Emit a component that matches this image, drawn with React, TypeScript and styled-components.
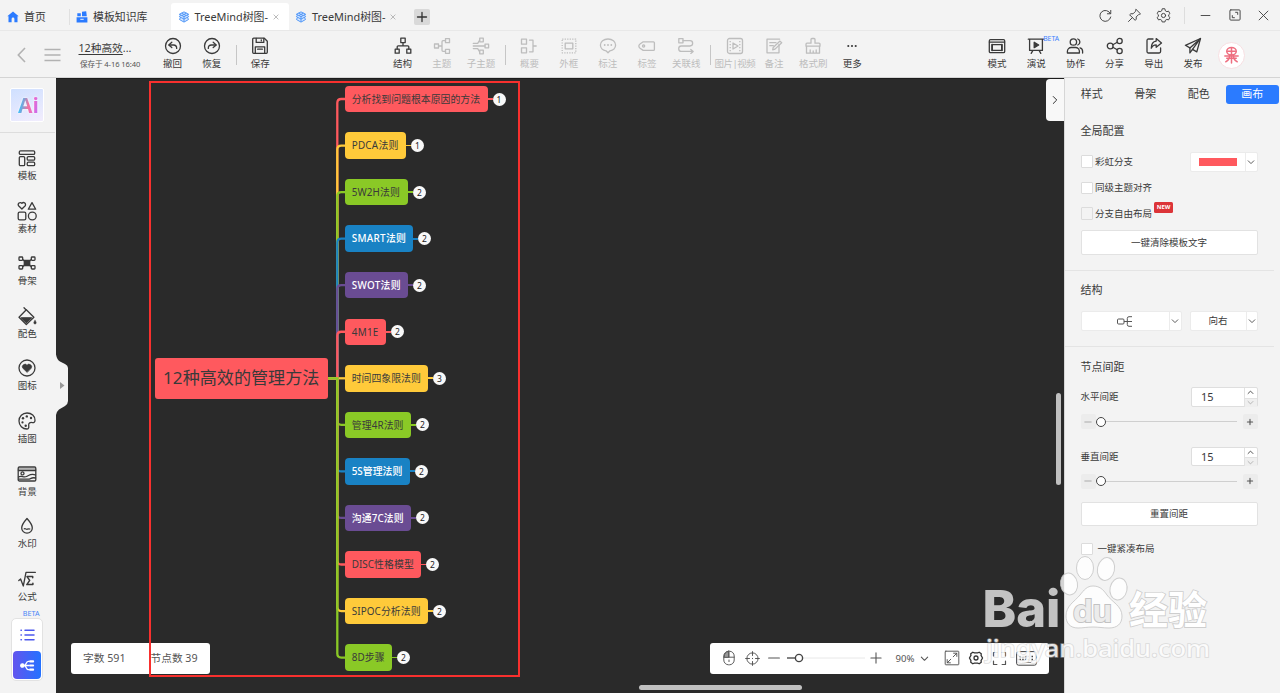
import React from "react";
import styled, { createGlobalStyle, css } from "styled-components";

const GlobalStyle = createGlobalStyle`
  * { box-sizing: border-box; }
  html, body { margin: 0; padding: 0; overflow: hidden; background: #f3f3f3; }
  body {
    font-family: "Noto Sans", "Noto Sans CJK SC", sans-serif;
    color: #3a3a3a;
    font-size: 9.5px;
    line-height: 1.2;
  }
  svg { display: block; flex: none; }
`;

const ink = "#3a3a3a";
const muted = "#bdbdbd";

/* ---------- icons, drawn on a 20 x 20 grid ---------- */

type IconProps = { size?: number; color?: string; sw?: number; children: React.ReactNode };
const Icon = ({ size = 20, color = "currentColor", sw = 1.3, children }: IconProps) => (
  <svg width={size} height={size} viewBox="0 0 20 20" fill="none" stroke={color} strokeWidth={sw} strokeLinejoin="round" strokeLinecap="round">
    {children}
  </svg>
);
const solid = { fill: "currentColor", stroke: "none" };

const icons: Record<string, React.ReactNode> = {
  undo: <><circle cx="10" cy="10" r="7.5" /><path d="M8.8 6.3 5.8 9l3 2.6" /><path d="M6.2 9h4.3c2 0 3.2 1.2 3.2 3.4" /></>,
  redo: <><circle cx="10" cy="10" r="7.5" /><path d="M11.2 6.3 14.2 9l-3 2.6" /><path d="M13.8 9H9.5c-2 0-3.2 1.2-3.2 3.4" /></>,
  save: <><path d="M2.7 3.2a1 1 0 0 1 1-1h10.6l3 3v11.1a1 1 0 0 1-1 1H3.7a1 1 0 0 1-1-1z" /><path d="M6.2 2.4v4h7.6v-4M11.3 3.8v1M5.3 17v-6.2h9.4V17M7.6 13.2h4.8" /></>,
  structure: <><rect x="7.8" y="2.2" width="4.4" height="4.4" /><rect x="2.2" y="13.2" width="4" height="4" /><rect x="13.8" y="13.2" width="4" height="4" /><path d="M10 6.6v3.2M4.2 13.2v-2.4a1 1 0 0 1 1-1h9.6a1 1 0 0 1 1 1v2.4" /></>,
  topic: <><rect x="2.5" y="8" width="4" height="4" /><rect x="13.5" y="2.7" width="4" height="4" /><rect x="13.5" y="13.3" width="4" height="4" /><path d="M6.5 10h3.5M13.5 4.7H11a1 1 0 0 0-1 1v8.6a1 1 0 0 0 1 1h2.5" /></>,
  subtopic: <><rect x="8.7" y="2.2" width="3.6" height="3.6" /><rect x="14" y="8.2" width="3.6" height="3.6" /><rect x="8.7" y="14.2" width="3.6" height="3.6" /><path d="M2.3 10H14M2.3 7.4h4.4L8.7 4M2.3 12.6h4.4l2 3.4" /></>,
  summary: <><rect x="2.5" y="3.2" width="5" height="5" /><rect x="2.5" y="11.8" width="5" height="5" /><path d="M10.5 4.2H14v11.6h-3.5M14 10h3.2" /></>,
  frame: <><rect x="3.2" y="3.2" width="13.6" height="13.6" strokeDasharray="1.2 1.3" strokeLinecap="butt" /><rect x="6.2" y="7.2" width="7.6" height="5.6" /></>,
  callout: <><path d="M10 3c4.4 0 7.6 2.6 7.6 6 0 3.2-2.6 5.4-5.6 5.8L10 16.8l-2-2C5 14.4 2.4 12.2 2.4 9c0-3.4 3.2-6 7.6-6z" /><g {...solid}><circle cx="6.7" cy="9" r=".9" /><circle cx="10" cy="9" r=".9" /><circle cx="13.3" cy="9" r=".9" /></g></>,
  tag: <><path d="M6.2 5.800h10.2a1 1 0 0 1 1 1v6.600a1 1 0 0 1-1 1H6.200L3 12.200a2.500 2.500 0 0 1 0-4.200z" /><circle cx="6.6" cy="10" r="1.1" /></>,
  relation: <><rect x="2.8" y="2.6" width="4.2" height="4.2" /><path d="M7 4.700h7a2.650 2.650 0 0 1 0 5.300H5.400a2.700 2.700 0 0 0 0 5.400H17M14.800 13.400l2.400 2-2.400 2" /></>,
  video: <><rect x="2.5" y="2.5" width="15" height="15" rx="2" /><path d="M8 7v6l5-3z" /><path d="M5.200 5v10.500M14.800 5v10.500" strokeDasharray="1.2 1.8" strokeLinecap="butt" /></>,
  note: <><path d="M15 8.500v8.300H3V3.200h12.600M5.800 6.700H12M5.800 9.700h3.500" /><path d="m8.700 13.800.5-2.400 6.800-6.300 1.700 1.700-6.700 6.300z" /></>,
  brush: <><path d="M3 10.200V8.200a1 1 0 0 1 1-1h4V3.400a.9.900 0 0 1 .9-.9h2.200a.9.900 0 0 1 .9.900v3.800h4a1 1 0 0 1 1 1v2zM3.500 10.200v7h13v-7M7.200 17v-3M10.200 17v-2M13.200 17v-3" /></>,
  more: <g {...solid}><circle cx="6.3" cy="10" r="1.05" /><circle cx="10" cy="10" r="1.05" /><circle cx="13.7" cy="10" r="1.05" /></g>,
  mode: <><rect x="2.3" y="3.7" width="15.4" height="13" rx="1.2" /><path d="M2.500 6.200h15" /><rect x="5" y="8.6" width="10" height="5.8" /><path d="M5.200 8.600v5.800M14.800 8.600v5.800" strokeWidth="1.6" /></>,
  present: <><path d="M2.300 3.200h15.400M3.600 3.400v11h12.800v-11M6.800 14.600l-1.600 2.800M13.200 14.600l1.600 2.800" /><path d="M8.200 6.300v5.400l4.500-2.700z" fill="currentColor" /></>,
  collab: <><circle cx="8.4" cy="6" r="3.2" /><path d="M2.400 17v-1.700a3.800 3.800 0 0 1 3.800-3.800h4.400a3.800 3.800 0 0 1 3.800 3.800V17zM12.800 3a3.200 3.200 0 0 1 0 6M15 11.800a3.500 3.500 0 0 1 2.600 3.500V17" /></>,
  share: <><circle cx="5.2" cy="10" r="2.9" /><circle cx="14.6" cy="5" r="2.6" /><circle cx="14.6" cy="15" r="2.6" /><path d="m7.800 8.700 4.500-2.400M7.800 11.300l4.500 2.400" /></>,
  exportIcon: <><path d="M9 3H4.400a1.400 1.400 0 0 0-1.400 1.400v11.200A1.400 1.400 0 0 0 4.400 17h10.800a1.400 1.400 0 0 0 1.400-1.400V12" /><path d="M12.200 2.600 17.500 7l-5.300 4.300V8.800c-2.600 0-4 1-4.900 3.400 0-4.300 1.800-6.700 4.900-7.100z" /></>,
  publish: <><path d="M17.500 2.500 2.400 9.300l4.500 2.600v5l2.600-3.500 4.300 2.500z" /><path d="m17.300 2.700-10.400 9.200M17.300 2.700 9.500 13.400" /></>,
  template: <><rect x="2.3" y="2.8" width="15.4" height="3.6" rx="1.2" /><rect x="2.3" y="8.6" width="5.4" height="9" rx="1.2" /><rect x="10.2" y="8.6" width="7.5" height="3.6" rx="1.2" /><rect x="10.2" y="14.2" width="7.5" height="3.4" rx="1.2" /></>,
  material: <><path d="M4.900 8 1.800 5A2 2 0 0 1 4.900 2.300 2 2 0 0 1 8 5zM15 1.600l3.700 6.600h-7.400z" /><rect x="1.2" y="11.2" width="7.6" height="7.6" rx="1.4" /><circle cx="15.3" cy="15" r="3.9" /></>,
  skeleton: <><rect x="2" y="4" width="3.7" height="3.4" rx=".8" /><rect x="14.3" y="4" width="3.7" height="3.4" rx=".8" /><rect x="2" y="12.6" width="3.7" height="3.4" rx=".8" /><rect x="14.3" y="12.6" width="3.7" height="3.4" rx=".8" /><rect x="7.3" y="7.3" width="5.4" height="5.4" fill="currentColor" /><path d="M5.700 6.400 7.500 8M14.300 6.400 12.500 8M5.700 13.800 7.500 12M14.300 13.800 12.500 12" /></>,
  paint: <><path d="M7 1.700 9.200 4M9.300 3.800l7.600 7.400-7.600 7.300L2 11.200z" /><path d="M4.300 11.800h10.200l-5.200 4.700z" fill="currentColor" /><path d="M18 14.300c1.700 2 1.700 3.700 0 3.700s-1.700-1.700 0-3.700z" fill="currentColor" strokeWidth=".4" /></>,
  badge: <><circle cx="10" cy="10" r="8" /><path d="M10 14.300 5.800 10.200A2.400 2.400 0 0 1 10 7.300a2.400 2.400 0 0 1 4.200 2.900z" fill="currentColor" strokeWidth=".6" /></>,
  palette: <><path d="M10 2c4.700 0 8 3.200 8 7.200 0 2-1.200 2.700-2.700 2.400-2-.5-3.800.3-3.600 2.400.1 1.600.5 4-1.700 4C5.500 18 2 14.500 2 10s3.500-8 8-8z" /><g {...solid}><circle cx="6" cy="7.3" r="1.2" /><circle cx="9.8" cy="5.4" r="1.2" /><circle cx="14" cy="7" r="1.2" /><circle cx="5.5" cy="11.4" r="1.1" /><circle cx="8.7" cy="14.7" r="1.2" /></g></>,
  background: <><rect x="1.2" y="3" width="17.6" height="14" rx="1.2" /><path d="M2 5.400h16" strokeWidth="2.4" strokeOpacity=".45" /><path d="M1.400 6.600h17.200" /><circle cx="5.5" cy="9.4" r="1.5" /><path d="M1.500 13c3-2 5 1 8-.5s5-3.500 9-1.500M1.500 15.200h10c2 0 3-2.300 7-1.200" /></>,
  drop: <><path d="M10 2.500c3.400 3.800 5.300 6.600 5.300 9.400a5.300 5.300 0 0 1-10.600 0c0-2.800 1.900-5.600 5.300-9.400z" /><path d="M7.300 12.800c1.200-.8 1.900.9 3 .4s1.700-.6 2.500-.2" /></>,
  formula: <><path d="M1.800 11.500 3.600 10l2.700 7L9 3.300h9.400" /><path d="M15.700 8.800V7.600H10l2.700 3.800-2.900 4.200h6.100v-1.400" strokeWidth="1.5" /></>,
};

/* ---------- frame ---------- */

const Window = styled.div`
  position: relative;
  width: 100vw;
  height: 100vh;
  display: grid;
  grid-template-rows: 31px 47px 1fr;
  background: #f3f3f3;
  overflow: hidden;
`;

const TitleBar = styled.header`
  display: flex;
  align-items: flex-start;
  border-bottom: 1px solid #e8e8e8;
  font-size: 10.9px;
  white-space: nowrap;
`;
const Tab = styled.div<{ $width: number; $pad: number; $active?: boolean }>`
  flex: none;
  display: flex;
  align-items: center;
  width: ${(p) => p.$width}px;
  height: 27px;
  margin-top: 3px;
  padding-left: ${(p) => p.$pad}px;
  gap: 5px;
  border-radius: 3px 3px 0 0;
  background: ${(p) => (p.$active ? "#fff" : "transparent")};
`;
const TabClose = styled.span`
  color: #999;
`;
const TabRule = styled.i`
  width: 1px;
  height: 16px;
  margin-top: 9px;
  background: #e0e0e0;
`;
const NewTab = styled.button`
  display: grid;
  place-items: center;
  width: 16px;
  height: 16px;
  margin: 9px 0 0 6px;
  padding: 0;
  border: 0;
  border-radius: 2px;
  background: #d9d9d9;
  color: #333;
`;
const WindowControls = styled.div`
  display: flex;
  align-items: center;
  height: 30px;
  margin-left: auto;
  padding-right: 1.5px;
  color: #444;
`;
const Control = styled.span`
  display: grid;
  place-items: center;
  width: 29.3px;
`;
const ControlRule = styled.i`
  width: 1px;
  height: 17px;
  margin: 0 5.5px;
  background: #ddd;
`;

const Toolbar = styled.div`
  display: flex;
  align-items: flex-start;
  border-bottom: 1px solid #d4d4d4;
`;
const BackArea = styled.div`
  display: flex;
  align-items: center;
  gap: 18px;
  width: 78.5px;
  height: 47px;
  padding-left: 16.5px;
  color: #b2b2b2;
`;
const DocInfo = styled.div`
  width: 74.5px;
  padding-top: 10px;
  white-space: nowrap;
`;
const DocTitle = styled.div`
  font-size: 10.7px;
  line-height: 14px;
  u { text-underline-offset: 2px; }
`;
const DocSaved = styled.div`
  margin: 4px 0 0 1.5px;
  font-size: 7.6px;
  letter-spacing: -0.1px;
  line-height: 11px;
  color: #555;
`;
const ToolGroup = styled.div<{ $gap?: number }>`
  display: flex;
  margin-left: ${(p) => p.$gap ?? 0}px;
`;
const ToolButton = styled.div<{ $off?: boolean }>`
  position: relative;
  display: flex;
  flex-direction: column;
  align-items: center;
  width: 39.2px;
  padding-top: 5px;
  color: ${(p) => (p.$off ? muted : ink)};
  white-space: nowrap;
`;
const ToolLabel = styled.span<{ $tight?: boolean }>`
  margin-top: 2px;
  line-height: 12px;
  letter-spacing: ${(p) => (p.$tight ? "-0.5px" : "0")};
`;
const ToolRule = styled.i`
  width: 1px;
  height: 20px;
  margin: 13.5px 4.2px 0;
  background: #c6c6c6;
`;
const ToolBeta = styled.span`
  position: absolute;
  top: 4px;
  left: 26.5px;
  font-size: 6.9px;
  line-height: 8px;
  color: #3b82ff;
`;
const Avatar = styled.div`
  display: grid;
  place-items: center;
  width: 27px;
  height: 27px;
  margin: 10.5px 0 0 5.5px;
  border: 1px solid #f7dfe2;
  border-radius: 50%;
  background: #fff;
`;

const Body = styled.main`
  display: grid;
  grid-template-columns: 55.5px 1fr 216px;
  min-height: 0;
`;

/* ---------- left rail ---------- */

const Rail = styled.nav`
  display: flex;
  flex-direction: column;
  align-items: center;
  padding-right: 1px;
`;
const AiSlot = styled.div`
  display: flex;
  flex: none;
  align-self: flex-start;
  justify-content: center;
  width: 55px;
  height: 55px;
  padding: 10px 1px 0 0;
  border-bottom: 1px solid #ddd;
`;
const AiTile = styled.div`
  display: grid;
  place-items: center;
  width: 34px;
  height: 34px;
  border: 1.5px solid #fff;
  border-radius: 2px;
  background: linear-gradient(160deg, #cfe0ff, #f2edfd);
`;
const AiText = styled.span`
  padding-left: 3px;
  font: 700 21px/22px "Open Sans", sans-serif;
  background: linear-gradient(100deg, #41bdf5 25%, #f4719f 55%, #e86ad0 75%, #b56bff);
  background-clip: text;
  -webkit-background-clip: text;
  color: transparent;
  filter: drop-shadow(0 0 1px #fff);
`;
const RailList = styled.div`
  padding-top: 7px;
`;
const RailItem = styled.div`
  display: flex;
  flex-direction: column;
  align-items: center;
  height: 52.6px;
  padding-top: 8px;
`;
const RailLabel = styled.span`
  margin-top: 2px;
  line-height: 12px;
`;
const RailBeta = styled.span`
  margin: -4.4px 0 0 8px;
  font-size: 7.2px;
  line-height: 8px;
  color: #4a86f7;
`;
const ViewSwitch = styled.div`
  display: flex;
  flex-direction: column;
  align-items: center;
  justify-content: space-between;
  width: 32px;
  height: 63px;
  margin-top: 1.5px;
  padding-bottom: 1px;
  border: 1px solid #e2e2e2;
  border-radius: 5px;
  background: #fff;
`;
const ViewOption = styled.div<{ $active?: boolean }>`
  display: grid;
  place-items: center;
  width: 28px;
  height: ${(p) => (p.$active ? 28.5 : 31)}px;
  border-radius: 4px;
  ${(p) => p.$active && css`background: linear-gradient(90deg, #6355ee, #2472ff);`}
`;

/* ---------- mind map canvas ---------- */

const Canvas = styled.section`
  position: relative;
  background: #2a2a2a;
  border-top: 1px solid #1c1c1c;
  overflow: hidden;
`;
const Links = styled.svg`
  position: absolute;
  left: 0;
  top: 0;
`;
const RootNode = styled.div`
  position: absolute;
  left: 99px;
  top: 279px;
  width: 173.5px;
  height: 40.5px;
  border-radius: 3px;
  background: #ff595e;
  font-size: 17.1px;
  line-height: 40px;
  text-align: center;
  white-space: nowrap;
`;
const Branch = styled.div<{ $y: number }>`
  position: absolute;
  left: 289.5px;
  top: ${(p) => p.$y - 13.25}px;
  display: flex;
  align-items: center;
`;
const Topic = styled.div<{ $w: number; $bg: string; $light?: boolean; $track: number }>`
  width: ${(p) => p.$w}px;
  height: 26.5px;
  padding-left: 6.7px;
  border-radius: 4px;
  background: ${(p) => p.$bg};
  color: ${(p) => (p.$light ? "#fff" : "#3a3a3a")};
  font-weight: ${(p) => (p.$light ? 500 : 400)};
  font-size: 9.9px;
  letter-spacing: ${(p) => p.$track}px;
  line-height: 26px;
  white-space: nowrap;
`;
const Stub = styled.i<{ $bg: string }>`
  width: 5px;
  height: 1.8px;
  background: ${(p) => p.$bg};
`;
const Count = styled.span`
  width: 13px;
  height: 13px;
  border-radius: 50%;
  background: #f8f8f8;
  color: #222;
  font-size: 8.5px;
  line-height: 13px;
  text-align: center;
`;
const Handle = styled.svg`
  position: absolute;
  left: 0;
  top: 275px;
`;
const PanelToggle = styled.div`
  position: absolute;
  right: 0;
  top: 0;
  display: grid;
  place-items: center;
  width: 18.5px;
  height: 41.5px;
  border-radius: 4px 0 0 4px;
  background: #f8f8f8;
  color: #333;
`;
const Stats = styled.div`
  position: absolute;
  left: 15px;
  top: 563.5px;
  display: flex;
  gap: 25px;
  width: 139px;
  height: 31.5px;
  padding-left: 12.5px;
  border-radius: 3px;
  background: #fff;
  color: #555;
  font-size: 10.7px;
  line-height: 31px;
  white-space: nowrap;
`;
const ZoomBar = styled.div`
  position: absolute;
  left: 654.5px;
  top: 563.5px;
  display: flex;
  align-items: center;
  width: 338.5px;
  height: 31.5px;
  padding-left: 8.5px;
  border-radius: 3px;
  background: #fff;
  color: #555;
`;
const ZoomCell = styled.span<{ $w: number; $gap?: number }>`
  display: flex;
  flex: none;
  justify-content: center;
  width: ${(p) => p.$w}px;
  margin-left: ${(p) => p.$gap ?? 0}px;
  font-size: 9.6px;
`;
const Scrollbar = styled.i<{ $x: number; $y: number; $w: number; $h: number }>`
  position: absolute;
  left: ${(p) => p.$x}px;
  top: ${(p) => p.$y}px;
  width: ${(p) => p.$w}px;
  height: ${(p) => p.$h}px;
  border-radius: 3px;
  background: #c0c0c0;
`;
const Marquee = styled.div`
  position: absolute;
  left: 149px;
  top: 81px;
  width: 371px;
  height: 596px;
  border: 2px solid #f8302e;
  pointer-events: none;
`;

/* ---------- settings panel ---------- */

const Panel = styled.aside`
  border-left: 1px solid #d6d6d6;
`;
const PanelTabs = styled.div`
  display: flex;
  height: 32px;
  padding: 6.5px 0 0 0;
`;
const PanelTab = styled.div<{ $active?: boolean }>`
  width: 53.5px;
  height: 19.5px;
  border-radius: 3px;
  background: ${(p) => (p.$active ? "#2b7bff" : "transparent")};
  color: ${(p) => (p.$active ? "#fff" : ink)};
  font-size: 11px;
  line-height: 18.5px;
  text-align: center;
`;
const Section = styled.section<{ $end: number }>`
  margin-right: 6px;
  padding: 0 16.5px ${(p) => p.$end}px 15.5px;
  border-bottom: ${(p) => (p.$end ? "1px solid #e4e4e4" : "0")};
`;
const Heading = styled.h3<{ $h: number }>`
  margin: 0;
  height: ${(p) => p.$h}px;
  font-size: 11px;
  font-weight: 400;
  line-height: ${(p) => p.$h}px;
`;
const Row = styled.div<{ $h: number; $top?: number }>`
  display: flex;
  align-items: center;
  justify-content: space-between;
  height: ${(p) => p.$h}px;
  margin-top: ${(p) => p.$top ?? 0}px;
  white-space: nowrap;
`;
const Check = styled.label<{ $gap?: number }>`
  display: flex;
  align-items: center;
  gap: ${(p) => p.$gap ?? 2}px;
`;
const Box = styled.i<{ $off?: boolean }>`
  width: 12.5px;
  height: 12.5px;
  border: 1px solid #dcdcdc;
  border-radius: 1px;
  background: ${(p) => (p.$off ? "#f3f3f3" : "#fff")};
`;
const NewBadge = styled.span`
  align-self: flex-start;
  width: 19px;
  height: 11px;
  margin-top: -5px;
  border-radius: 1.5px;
  background: #dc3438;
  color: #fff;
  font-weight: 700;
  font-size: 5.8px;
  line-height: 11px;
  text-align: center;
`;
const WideButton = styled.button<{ $top: number }>`
  display: block;
  width: 177px;
  height: 24.5px;
  margin: ${(p) => p.$top}px 0 0;
  padding: 0;
  border: 1px solid #e2e2e2;
  border-radius: 2px;
  background: #fff;
  color: ${ink};
  font: inherit;
`;
const Select = styled.div<{ $w: number; $arrow: number }>`
  display: grid;
  grid-template-columns: 1fr ${(p) => p.$arrow}px;
  width: ${(p) => p.$w}px;
  height: 20px;
  border: 1px solid #ebebeb;
  border-radius: 2px;
  background: #fff;
  & > * { display: grid; place-items: center; }
  & > * + * { border-left: 1px solid #ececec; }
`;
const Swatch = styled.i`
  width: 38px;
  height: 8px;
  background: #ff595e;
`;
const NumberBox = styled.div`
  display: grid;
  grid-template-columns: 1fr 13px;
  width: 66.5px;
  height: 19.5px;
  border: 1px solid #dedede;
  border-radius: 2px;
  background: #fff;
  font-size: 11px;
  line-height: 18.5px;
  padding-left: 9px;
`;
const Spin = styled.div`
  display: grid;
  grid-template-rows: 1fr 1fr;
  border-left: 1px solid #e2e2e2;
  & > * { display: grid; place-items: center; }
  & > * + * { background: #efefef; border-top: 1px solid #e2e2e2; }
`;
const Step = styled.span<{ $off?: boolean }>`
  display: grid;
  place-items: center;
  width: 15px;
  height: 15px;
  border-radius: 2px;
  background: #ececec;
  color: ${(p) => (p.$off ? "#aaa" : "#555")};
`;
const Track = styled.div`
  display: flex;
  align-items: center;
  flex: 1;
  margin: 0 6px 0 0.5px;
  &::before {
    content: "";
    width: 8px;
    height: 8px;
    border: 1.4px solid #444;
    border-radius: 50%;
    background: #fff;
  }
  &::after {
    content: "";
    flex: 1;
    height: 1px;
    background: #cfcfcf;
  }
`;
const Watermark = styled.svg`
  position: absolute;
  left: 970px;
  top: 545px;
  pointer-events: none;
  text { paint-order: stroke; }
`;

/* ---------- data ---------- */

const red = "#ff595e", yellow = "#ffca3a", green = "#8ac926", blue = "#1982c4", purple = "#6a4c93";
const topics: { text: string; w: number; color: string; n: number; track?: number }[] = [
  { text: "分析找到问题根本原因的方法", w: 142.5, color: red, n: 1 },
  { text: "PDCA法则", w: 61, color: yellow, n: 1, track: 0.25 },
  { text: "5W2H法则", w: 63, color: green, n: 2, track: 0.15 },
  { text: "SMART法则", w: 68, color: blue, n: 2, track: 0.3 },
  { text: "SWOT法则", w: 63, color: purple, n: 2, track: 0.3 },
  { text: "4M1E", w: 41, color: red, n: 2, track: 0.3 },
  { text: "时间四象限法则", w: 83, color: yellow, n: 3 },
  { text: "管理4R法则", w: 66, color: green, n: 2, track: 0.1 },
  { text: "5S管理法则", w: 65, color: blue, n: 2 },
  { text: "沟通7C法则", w: 66, color: purple, n: 2, track: 0.1 },
  { text: "DISC性格模型", w: 76, color: red, n: 2, track: 0.05 },
  { text: "SIPOC分析法则", w: 83, color: yellow, n: 2, track: 0.1 },
  { text: "8D步骤", w: 47, color: green, n: 2, track: 0.1 },
];
const topicY = (i: number) => 20 + i * 46.55;
const rootY = topicY(6);

const linkPath = (y: number) => {
  if (Math.abs(y - rootY) < 1) return `M272 ${y}H291`;
  const d = y < rootY ? 4 : -4;
  return `M272 ${rootY}H281.3V${y + d}Q281.3 ${y} 285.3 ${y}H291`;
};

type Tool = [string, string];
const editTools: Tool[][] = [
  [["structure", "结构"], ["topic", "主题"], ["subtopic", "子主题"]],
  [["summary", "概要"], ["frame", "外框"], ["callout", "标注"], ["tag", "标签"], ["relation", "关联线"]],
  [["video", "图片|视频"], ["note", "备注"], ["brush", "格式刷"], ["more", "更多"]],
];
const shareTools: Tool[] = [
  ["mode", "模式"], ["present", "演说"], ["collab", "协作"], ["share", "分享"], ["exportIcon", "导出"], ["publish", "发布"],
];
const railItems: Tool[] = [
  ["template", "模板"], ["material", "素材"], ["skeleton", "骨架"], ["paint", "配色"], ["badge", "图标"],
  ["palette", "插图"], ["background", "背景"], ["drop", "水印"], ["formula", "公式"],
];

const ToolItem = ({ tool, off }: { tool: Tool; off?: boolean }) => (
  <ToolButton $off={off}>
    <Icon>{icons[tool[0]]}</Icon>
    <ToolLabel $tight={tool[0] === "video"}>{tool[1]}</ToolLabel>
    {tool[0] === "present" && <ToolBeta>BETA</ToolBeta>}
  </ToolButton>
);

const Chevron = ({ up, size = 8, color = "#555" }: { up?: boolean; size?: number; color?: string }) => (
  <Icon size={size} sw={2.4} color={color}><path d={up ? "M3 13l7-7 7 7" : "M3 7l7 7 7-7"} /></Icon>
);

const TreeLogo = () => (
  <svg width="12" height="12" viewBox="0 0 20 20" fill="#d4e6ff" stroke="#4b93f7" strokeWidth="1.6" strokeLinejoin="round">
    <path d="M10 1.500 17.500 5.300 16 7l1.500 2.300L16 11l1.500 3.200L10 18.500l-7.500-4.300L4 11 2.500 9.300 4 7 2.500 5.300z" />
    <path d="M2.500 5.500 10 9.500l7.500-4M2.500 9.500 10 13.500l7.500-4M10 9.500V18M6 3.600l7.500 4M14 3.600l-7.500 4" fill="none" />
  </svg>
);

const Spacing = ({ label, top }: { label: string; top?: number }) => (
  <>
    <Row $h={20} $top={top}>
      {label}
      <NumberBox>
        15
        <Spin>
          <span><Chevron up size={7} color="#333" /></span>
          <span><Chevron size={7} color="#aaa" /></span>
        </Spin>
      </NumberBox>
    </Row>
    <Row $h={29}>
      <Step $off><Icon size={8} sw={2.5}><path d="M2 10h16" /></Icon></Step>
      <Track />
      <Step><Icon size={8} sw={2.8}><path d="M3.500 10h13M10 3.500v13" /></Icon></Step>
    </Row>
  </>
);

export default function App() {
  return (
    <Window>
      <GlobalStyle />

      <TitleBar>
        <Tab $width={69} $pad={7}>
          <svg width="12" height="12" viewBox="0 0 12 12" fill="#2b7bff"><path d="M6 .5 11.700 5.200H10.500V11.200H7.400V8a1.400 1.400 0 0 0-2.800 0v3.200H1.500v-6H.3z" /></svg>
          首页
        </Tab>
        <TabRule />
        <Tab $width={101} $pad={6}>
          <svg width="12" height="12" viewBox="0 0 12 12" fill="#2b7bff"><path d="M1.300 2.300h3.500v3H1.300zM6 .8l4.200-.5.6 5H6zM.6 6.200h10.800v5.200H.6z" /><path d="M4.300 8.300h3.400" stroke="#fff" strokeWidth=".9" /></svg>
          模板知识库
        </Tab>
        <Tab $width={118} $pad={6.5} $active>
          <TreeLogo />TreeMind树图-<TabClose><Icon size={6} sw={2.2}><path d="M3 3l14 14M17 3 3 17" /></Icon></TabClose>
        </Tab>
        <Tab $width={119} $pad={6}>
          <TreeLogo />TreeMind树图-<TabClose><Icon size={6} sw={2.2}><path d="M3 3l14 14M17 3 3 17" /></Icon></TabClose>
        </Tab>
        <NewTab><Icon size={12} sw={2.2}><path d="M2.500 10h15M10 2.500v15" /></Icon></NewTab>
        <WindowControls>
          <Control><Icon size={15}><path d="M16.500 7.500A7.300 7.300 0 1 0 17 12M17 3.200v4.500h-4.500" /></Icon></Control>
          <Control><Icon size={15}><path d="m12.200 2 5.800 5.800-1.600.8-1 .2-3.200 3.200.2 2.800-1.500 1.700L3.500 9.100 5.200 7.600 8 7.800l3.200-3.200.2-1zM7 13l-5 5" /></Icon></Control>
          <Control><Icon size={15}><circle cx="10" cy="10" r="2.8" /><path d="m8.200 1.500-.6 2.300-2 1.100-2.200-.7-1.900 3.200 1.700 1.600v2.200l-1.700 1.500 1.900 3.200 2.200-.7 2 1.200.6 2.200h3.700l.6-2.200 2-1.200 2.200.7 1.900-3.200-1.700-1.500V9l1.700-1.600-1.900-3.200-2.200.7-2-1.100-.6-2.300z" /></Icon></Control>
          <ControlRule />
          <Control><Icon size={11} sw={1.7}><path d="M2 10h16" /></Icon></Control>
          <Control><Icon size={12} sw={1.6}><rect x="1.5" y="1.5" width="17" height="17" rx="1.5" /><path d="M11 5.500h3.500V9M9 14.500H5.500V11" /></Icon></Control>
          <Control><Icon size={11} sw={1.7}><path d="M2 2l16 16M18 2 2 18" /></Icon></Control>
        </WindowControls>
      </TitleBar>

      <Toolbar>
        <BackArea>
          <svg width="9" height="16" viewBox="0 0 9 16" fill="none" stroke="currentColor" strokeWidth="1.6"><path d="M8 1 1.300 8 8 15" /></svg>
          <svg width="17" height="14" viewBox="0 0 17 14" stroke="currentColor" strokeWidth="1.5"><path d="M.5 1.500h16M.5 7h16M.5 12.500h16" /></svg>
        </BackArea>
        <DocInfo>
          <DocTitle><u>12种高效</u>...</DocTitle>
          <DocSaved>保存于 4-16 16:40</DocSaved>
        </DocInfo>
        <ToolGroup>
          <ToolItem tool={["undo", "撤回"]} />
          <ToolItem tool={["redo", "恢复"]} />
          <ToolRule />
          <ToolItem tool={["save", "保存"]} />
        </ToolGroup>
        <ToolGroup $gap={103}>
          {editTools.map((group, g) => (
            <React.Fragment key={g}>
              {g > 0 && <ToolRule />}
              {group.map((t) => <ToolItem key={t[0]} tool={t} off={t[0] !== "structure" && t[0] !== "more"} />)}
            </React.Fragment>
          ))}
        </ToolGroup>
        <ToolGroup $gap={105.5}>
          {shareTools.map((t) => <ToolItem key={t[0]} tool={t} />)}
          <Avatar>
            <Icon size={19} color="#ee6f80" sw={1.6}>
              <ellipse cx="10" cy="5.5" rx="5" ry="4" />
              <path d="M6 5.500h8M10 2v16M3 10.500h14M8 9.500c0 4-1.500 6-4 7M12 9.500c0 4 1.500 6 4 7M5 13h10" />
            </Icon>
          </Avatar>
        </ToolGroup>
      </Toolbar>

      <Body>
        <Rail>
          <AiSlot><AiTile><AiText>Ai</AiText></AiTile></AiSlot>
          <RailList>
            {railItems.map(([icon, label]) => (
              <RailItem key={icon}>
                <Icon>{icons[icon]}</Icon>
                <RailLabel>{label}</RailLabel>
              </RailItem>
            ))}
          </RailList>
          <RailBeta>BETA</RailBeta>
          <ViewSwitch>
            <ViewOption>
              <svg width="15" height="12" viewBox="0 0 15 12" stroke="#4d58ee" strokeWidth="1.5" strokeLinecap="round"><path d="M1 1.300h.4M1 6h.4M1 10.700h.4M5 1.300h9M5 6h9M5 10.700h9" /></svg>
            </ViewOption>
            <ViewOption $active>
              <Icon size={15} color="#fff" sw={1.8}>
                <circle cx="3.2" cy="10" r="2.2" fill="#fff" />
                <path d="M4 10h8M12 4.500h-1C8 4.500 8 10 6 10c2 0 2 5.500 5 5.500h1" />
                <path d="M13.500 4.500h4M13.500 10h4M13.500 15.500h4" strokeWidth="2.8" />
              </Icon>
            </ViewOption>
          </ViewSwitch>
        </Rail>

        <Canvas>
          <Links width="300" height="614" fill="none" strokeWidth="2.3">
            {topics.map((t, i) => <path key={t.text} d={linkPath(topicY(i))} stroke={t.color} />)}
          </Links>
          <RootNode>12种高效的管理方法</RootNode>
          {topics.map((t, i) => (
            <Branch key={t.text} $y={topicY(i)}>
              <Topic $w={t.w} $bg={t.color} $light={t.color === blue || t.color === purple} $track={t.track ?? 0}>{t.text}</Topic>
              <Stub $bg={t.color} />
              <Count>{t.n}</Count>
            </Branch>
          ))}
          <Handle width="13" height="62" viewBox="0 0 13 62">
            <path d="M0 .500Q1 6 4 7.500l5 2.500q3 1.500 3 4v33q0 3-3 5l-6 3.500Q1 57 0 61z" fill="#f3f3f3" />
            <path d="M4 28v7l4.500-3.500z" fill="#999" />
          </Handle>
          <PanelToggle><Icon size={10} sw={2}><path d="M6.500 3l7 7-7 7" /></Icon></PanelToggle>
          <Stats><span>字数 591</span><span>节点数 39</span></Stats>
          <ZoomBar>
            <ZoomCell $w={20}><Icon size={16} sw={1.2}><rect x="3.5" y="1.5" width="13" height="17" rx="6" /><path d="M3.500 9h13M10 1.500V9" /><path d="M4 8.500c0-4 2-6.500 5.500-6.500v6.500z" fill="#999" /><path d="M10 12.500v2" /></Icon></ZoomCell>
            <ZoomCell $w={27}><Icon size={15} sw={1.3}><circle cx="10" cy="10" r="7.5" /><path d="M10 .8V6M10 14v5.200M.8 10H6M14 10h5.200M10 9.800v.4" /></Icon></ZoomCell>
            <ZoomCell $w={17}><Icon size={12} sw={1.8}><path d="M1 10h18" /></Icon></ZoomCell>
            <ZoomCell $w={86}><svg width="78" height="10" viewBox="0 0 78 10" fill="none"><path d="M0 5h78" stroke="#e8e8e8" /><path d="M0 5h8" stroke="#444" strokeWidth="1.3" /><circle cx="12" cy="5" r="3.6" stroke="#444" strokeWidth="1.4" fill="#fff" /></svg></ZoomCell>
            <ZoomCell $w={15}><Icon size={12} sw={1.8}><path d="M1.500 10h17M10 1.500v17" /></Icon></ZoomCell>
            <ZoomCell $w={24} $gap={9.5}>90%</ZoomCell>
            <ZoomCell $w={15}><Chevron size={9} /></ZoomCell>
            <ZoomCell $w={40}><Icon size={16} sw={1.2}><rect x="1.5" y="1.5" width="17" height="17" rx=".8" /><path d="M11.500 8.500 16 4M12 4h4v4M8.500 11.500 4 16M4 12v4h4" /></Icon></ZoomCell>
            <ZoomCell $w={8}><Icon size={16} sw={1.6} color="#333"><circle cx="10" cy="10" r="2.5" /><path d="M6 2.800 8 3.600h4l2-.8 2.600 2-.3 2L18.200 10l-1.900 3.200.3 2-2.600 2-2-.8H8l-2 .8-2.600-2 .3-2L1.800 10l1.900-3.200-.3-2z" /></Icon></ZoomCell>
            <ZoomCell $w={38}><Icon size={15} sw={1.6}><path d="M2 6.500V2h4.500M13.500 2H18v4.500M18 13.500V18h-4.500M6.500 18H2v-4.500" /></Icon></ZoomCell>
            <ZoomCell $w={16}><svg width="21" height="15" viewBox="0 0 21 15" fill="none" stroke="#444"><rect x=".6" y=".6" width="19.8" height="13.6" rx="2" /><path d="M3.500 5.500h9.500M3.500 8.500h9.500M15.500 5.500h2M15.500 8.500h2" strokeWidth="1.5" strokeDasharray="1.5 1.2" /><path d="M6 11.500h9" strokeOpacity=".6" /></svg></ZoomCell>
          </ZoomBar>
          <Scrollbar $x={1000} $y={313.5} $w={5} $h={92} />
          <Scrollbar $x={583} $y={605.5} $w={163} $h={5} />
        </Canvas>

        <Panel>
          <PanelTabs>
            <PanelTab>样式</PanelTab>
            <PanelTab>骨架</PanelTab>
            <PanelTab>配色</PanelTab>
            <PanelTab $active>画布</PanelTab>
          </PanelTabs>
          <Section $end={15.5}>
            <Heading $h={42}>全局配置</Heading>
            <Row $h={19}>
              <Check><Box />彩虹分支</Check>
              <Select $w={68} $arrow={12}><span><Swatch /></span><span><Chevron /></span></Select>
            </Row>
            <Row $h={34}><Check><Box />同级主题对齐</Check></Row>
            <Row $h={17}><Check><Box $off />分支自由布局<NewBadge>NEW</NewBadge></Check></Row>
            <WideButton $top={8}>一键清除模板文字</WideButton>
          </Section>
          <Section $end={15}>
            <Heading $h={38}>结构</Heading>
            <Row $h={20} $top={2}>
              <Select $w={101} $arrow={12}>
                <span><svg width="16" height="11" viewBox="0 0 16 11" fill="none" stroke="#555"><rect x=".5" y="3" width="6.5" height="5" rx="1" /><path d="M7 5.500h8M15 .7h-3q-1.700 0-1.700 1.700v6.200q0 1.700 1.700 1.700h3" /></svg></span>
                <span><Chevron /></span>
              </Select>
              <Select $w={68} $arrow={11}><span>向右</span><span><Chevron /></span></Select>
            </Row>
          </Section>
          <Section $end={0}>
            <Heading $h={40}>节点间距</Heading>
            <Spacing label="水平间距" />
            <Spacing label="垂直间距" top={10.5} />
            <WideButton $top={6}>重置间距</WideButton>
            <Row $h={26} $top={10}><Check $gap={4.5}><Box />一键紧凑布局</Check></Row>
          </Section>
        </Panel>
      </Body>

      <Marquee />

      <Watermark width="250" height="125" viewBox="970 545 250 125" fill="#fff">
        <text x="982.500" y="627" fontFamily="Inter, sans-serif" fontWeight="800" fontSize="51" textLength="78" lengthAdjust="spacingAndGlyphs" fillOpacity=".72">Bai</text>
        <g stroke="#c4c4c4" strokeOpacity=".8" strokeWidth="1" fillOpacity=".8">
          <ellipse cx="1069" cy="584" rx="8.5" ry="11" transform="rotate(-10 1069 584)" />
          <ellipse cx="1085" cy="568" rx="8.5" ry="11.5" />
          <ellipse cx="1106" cy="569" rx="8.5" ry="11.5" transform="rotate(12 1106 569)" />
          <ellipse cx="1118.5" cy="589" rx="8.5" ry="11" transform="rotate(12 1118.5 589)" />
          <path d="M1093 586c6 0 10 3 14 9 5 7 15 11 15 21 0 8-5 12-13 12-6 0-10-1-16-1s-10 1-15 1c-8 0-12-5-12-12 0-10 8-14 14-21 4-5 7-9 13-9z" />
          <text x="1073" y="621.500" fontFamily="Inter, sans-serif" fontWeight="700" fontSize="31" textLength="39" lengthAdjust="spacingAndGlyphs" fill="#ececec" fillOpacity="1" stroke="#b4b4b4" strokeWidth="2">du</text>
          <text x="1129" y="624" fontFamily="Noto Sans CJK SC, sans-serif" fontWeight="700" fontSize="39" textLength="78" lengthAdjust="spacingAndGlyphs" fillOpacity="1" strokeWidth="1.8">经验</text>
          <text x="986" y="657" fontFamily="Noto Sans, sans-serif" fontWeight="500" fontSize="23.5" textLength="224" lengthAdjust="spacingAndGlyphs" fillOpacity=".85" strokeOpacity=".55" strokeWidth="1.6">jingyan.baidu.com</text>
        </g>
      </Watermark>
    </Window>
  );
}
